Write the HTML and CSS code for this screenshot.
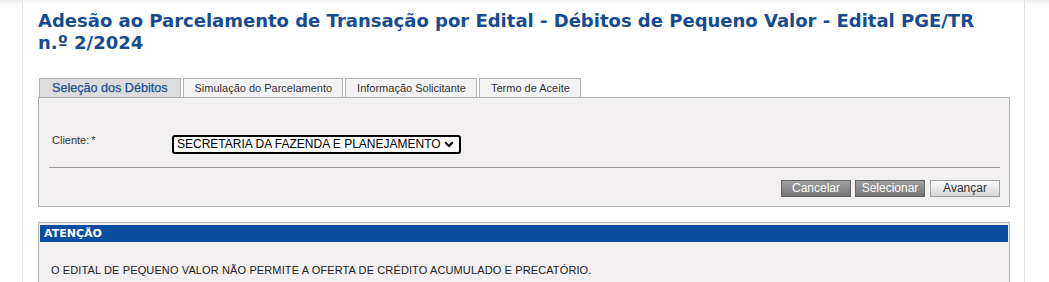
FILE: index.html
```html
<!DOCTYPE html>
<html lang="pt-BR">
<head>
<meta charset="utf-8">
<title>Adesão ao Parcelamento</title>
<link rel="stylesheet" href="styles.css">
</head>
<body>
<div class="page">
  <h1 class="title">Adesão ao Parcelamento de Transação por Edital - Débitos de Pequeno Valor - Edital PGE/TR n.º 2/2024</h1>

  <div class="tabs">
    <div class="tab active">Seleção dos Débitos</div>
    <div class="tab">Simulação do Parcelamento</div>
    <div class="tab">Informação Solicitante</div>
    <div class="tab">Termo de Aceite</div>
  </div>

  <div class="panel">
    <div class="form-row">
      <label class="label">Cliente:<span class="req">*</span></label>
      <div class="select">
        <span class="select-text">SECRETARIA DA FAZENDA E PLANEJAMENTO</span>
        <svg class="chev" width="10" height="7" viewBox="0 0 10 7"><path d="M1.2 1.3 L5 5 L8.8 1.3" fill="none" stroke="#000" stroke-width="2"/></svg>
      </div>
    </div>
    <div class="divider"></div>
    <div class="actions">
      <button class="btn btn-dark">Cancelar</button>
      <button class="btn btn-dark">Selecionar</button>
      <button class="btn btn-light">Avançar</button>
    </div>
  </div>

  <div class="notice">
    <div class="notice-head">ATENÇÃO</div>
    <div class="notice-body">O EDITAL DE PEQUENO VALOR NÃO PERMITE A OFERTA DE CRÉDITO ACUMULADO E PRECATÓRIO.</div>
  </div>
</div>
</body>
</html>
```

FILE: styles.css
```css
html, body {
  margin: 0;
  padding: 0;
  background: #ffffff;
}

body {
  font-family: "Liberation Sans", Arial, sans-serif;
  color: #333;
  height: 282px;
  overflow: hidden;
  background: linear-gradient(#ececec, #ffffff 5px);
}

.page {
  margin-left: 22px;
  width: 1003px;
  min-height: 282px;
  border-left: 1px solid #e6e6e6;
  border-right: 1px solid #e2e2e2;
  padding: 10px 0 0 15px;
  box-sizing: border-box;
  background: linear-gradient(#f3f3f3, #ffffff 5px);
}

.title {
  margin: 0;
  width: 960px;
  font-family: "DejaVu Sans", Verdana, sans-serif;
  font-weight: bold;
  font-size: 18px;
  line-height: 22px;
  color: #174b91;
}

.tabs {
  display: flex;
  gap: 2px;
  margin-top: 24px;
  padding-left: 1px;
  height: 19px;
}

.tab {
  box-sizing: border-box;
  height: 19px;
  padding: 0 10px 0 11px;
  border: 1px solid #b4b4b4;
  border-bottom: none;
  background: #f3f3f3;
  font-size: 11px;
  line-height: 18px;
  color: #333;
}

.tab.active {
  background: #dcdcdc;
  color: #1b4f94;
  font-size: 12.6px;
  font-weight: 500;
  -webkit-text-stroke: 0.25px #1b4f94;
  padding: 0 12px 0 12px;
}

.panel {
  width: 972px;
  box-sizing: border-box;
  height: 110px;
  border: 1px solid #b0b0b0;
  background: #f2f0f0;
  padding: 36px 9px 0 10px;
}

.form-row {
  display: flex;
  align-items: center;
  height: 20px;
}

.label {
  width: 120px;
  padding-left: 3px;
  font-size: 11px;
  color: #333;
  margin-top: -8px;
}

.req {
  margin-left: 2px;
}

.select {
  box-sizing: border-box;
  width: 289px;
  height: 19px;
  border: 2px solid #000;
  border-radius: 3px;
  background: #fff;
  display: flex;
  align-items: center;
  justify-content: space-between;
  padding: 0 5px 0 3px;
  font-size: 12px;
  color: #000;
}

.divider {
  margin-top: 13px;
  border-top: 1px solid #9a9a9a;
  height: 0;
}

.actions {
  display: flex;
  justify-content: flex-end;
  gap: 4px;
  margin-top: 12px;
}

.btn {
  box-sizing: border-box;
  width: 70px;
  height: 17px;
  padding: 0;
  font-family: "Liberation Sans", Arial, sans-serif;
  font-size: 12px;
  line-height: 15px;
  border-radius: 0;
}

.btn-dark {
  background: linear-gradient(#a0a0a0, #767676);
  border: 1px solid #626262;
  color: #ffffff;
}

.btn-light {
  background: linear-gradient(#fbfbfb, #d6d6d6);
  border: 1px solid #a0a0a0;
  color: #333;
  margin-left: 1px;
}

.notice {
  width: 972px;
  box-sizing: border-box;
  margin-top: 15px;
  border: 1px solid #b0b0b0;
  background: #f2f0f0;
  padding: 2px 1px 0 1px;
  height: 80px;
}

.notice-head {
  background: #0b4d9e;
  color: #fff;
  font-family: "DejaVu Sans", Verdana, sans-serif;
  font-weight: bold;
  font-size: 11px;
  line-height: 17px;
  height: 17px;
  padding-left: 4px;
}

.notice-body {
  padding: 22px 0 0 11px;
  font-size: 11px;
  letter-spacing: 0.12px;
  color: #222;
}
```
